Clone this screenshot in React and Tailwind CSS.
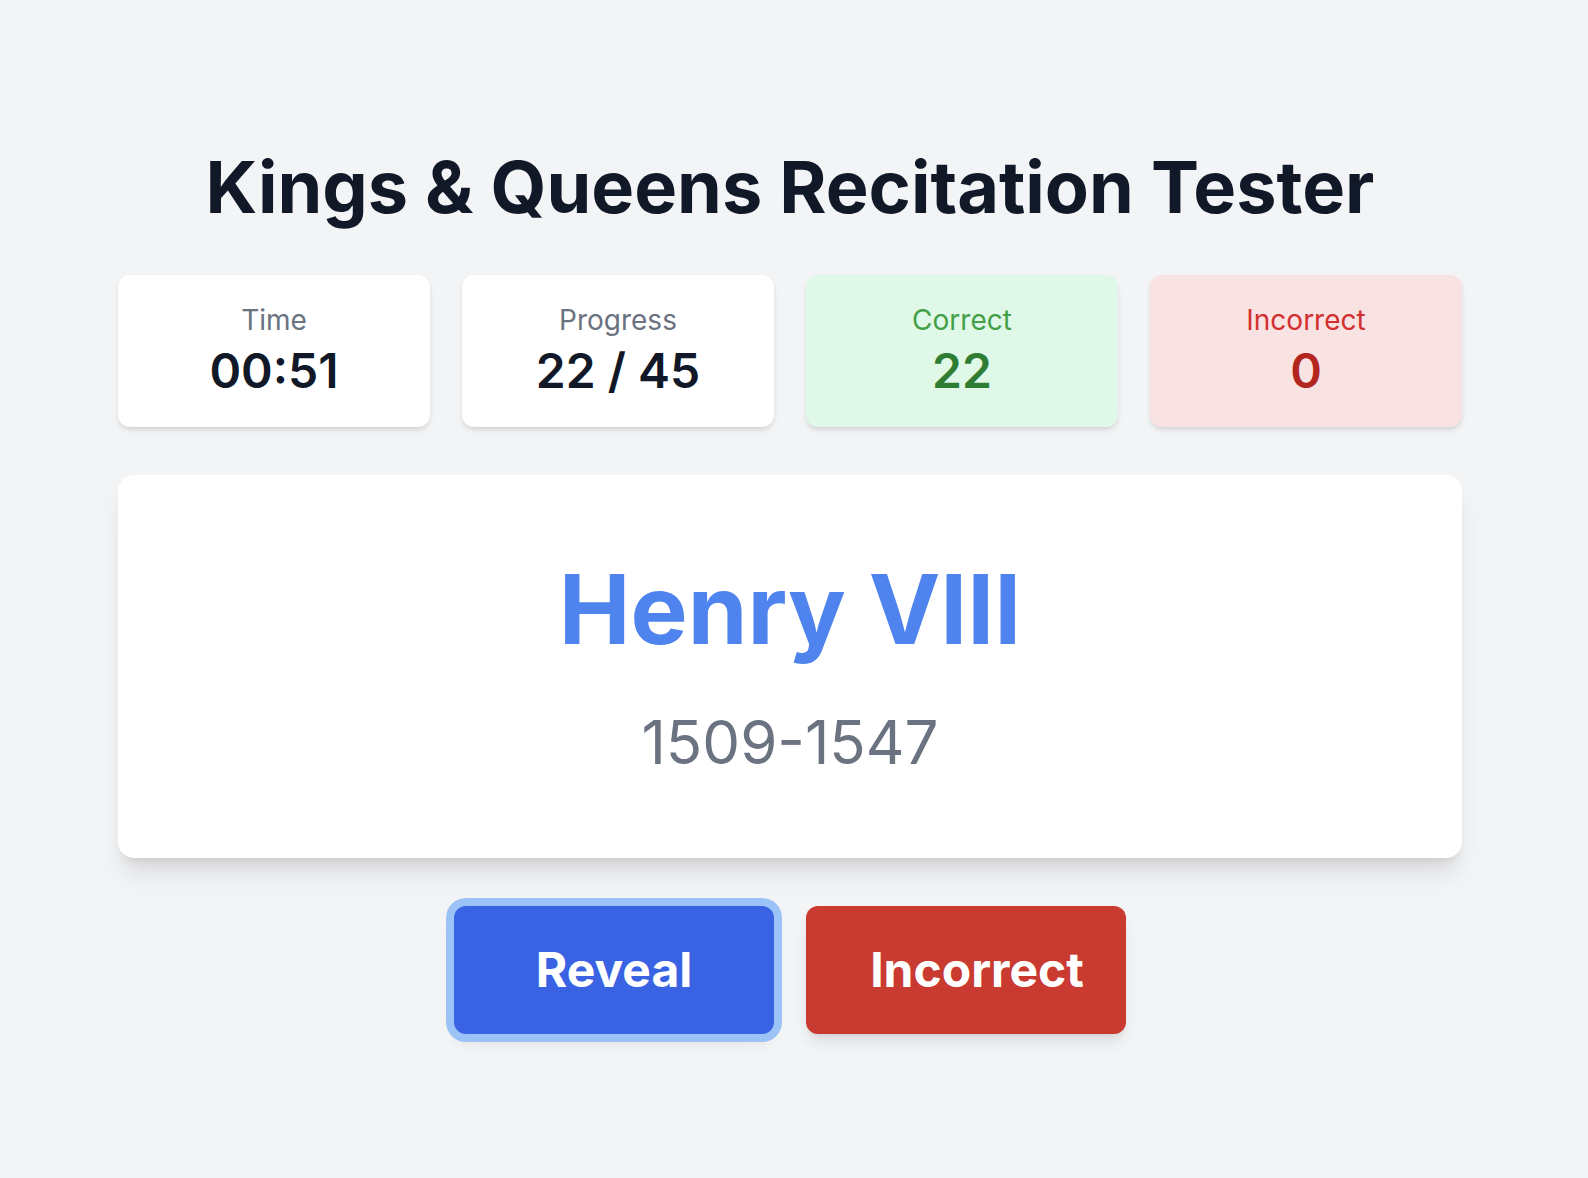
export default function App() {
  const font = { fontFamily: "Inter, 'Noto Sans', sans-serif" };
  return (
    <div className="min-h-screen bg-[#f3f4f6] font-['Inter',sans-serif]" style={font}>
      <div className="ml-[118px] w-[1344px] pt-[151px] pb-[136px] flex flex-col items-center">
        <h1 className="text-[72px] leading-none font-bold text-[#111827] tracking-normal">
          Kings &amp; Queens Recitation Tester
        </h1>

        <div className="mt-[52px] w-full grid grid-cols-4 gap-8">
          <div className="rounded-xl bg-white shadow-md pt-6 pb-[26px] flex flex-col items-center">
            <div className="text-[28px] leading-[42px] text-[#6b7280]">Time</div>
            <div className="text-[48px] leading-[60px] font-semibold text-[#111827]">00:51</div>
          </div>
          <div className="rounded-xl bg-white shadow-md pt-6 pb-[26px] flex flex-col items-center">
            <div className="text-[28px] leading-[42px] text-[#6b7280]">Progress</div>
            <div className="text-[48px] leading-[60px] font-semibold text-[#111827]">22 / 45</div>
          </div>
          <div className="rounded-xl bg-[#e0f8e7] shadow-md pt-6 pb-[26px] flex flex-col items-center">
            <div className="text-[28px] leading-[42px] text-[#43a047]">Correct</div>
            <div className="text-[48px] leading-[60px] font-semibold text-[#2e7d32]">22</div>
          </div>
          <div className="rounded-xl bg-[#f8e2e2] shadow-md pt-6 pb-[26px] flex flex-col items-center">
            <div className="text-[28px] leading-[42px] text-[#d32f2f]">Incorrect</div>
            <div className="text-[48px] leading-[60px] font-semibold text-[#b3261e]">0</div>
          </div>
        </div>

        <div className="mt-12 w-full h-[383px] rounded-2xl bg-white shadow-xl flex flex-col items-center justify-center">
          <div className="text-[96px] leading-none font-bold text-[#4f83ee]">Henry VIII</div>
          <div className="mt-[55px] text-[60px] leading-none text-[#6b7280]">1509-1547</div>
        </div>

        <div className="mt-12 flex gap-8">
          <button className="w-[320px] h-[128px] rounded-xl bg-[#3a63e3] text-white text-[48px] font-bold ring-8 ring-[#9cc3f7] shadow-lg">
            Reveal
          </button>
          <button className="w-[320px] h-[128px] rounded-xl bg-[#c93a31] text-white text-[48px] font-bold shadow-lg pl-[22px]">
            Incorrect
          </button>
        </div>
      </div>
    </div>
  );
}
